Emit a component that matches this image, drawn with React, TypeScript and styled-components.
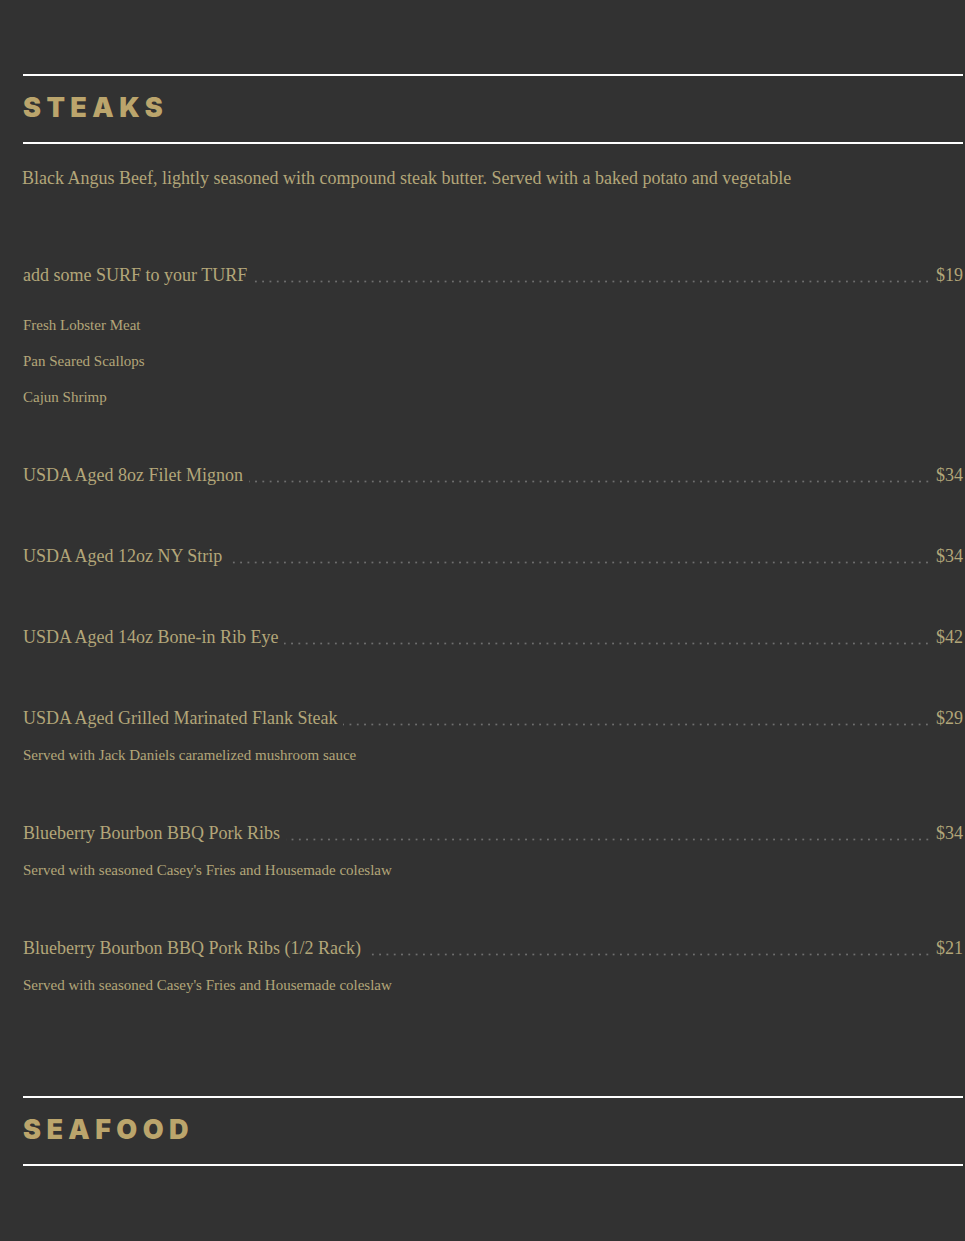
import React from 'react';
import styled, { createGlobalStyle } from 'styled-components';

const GOLD = '#b3a679';
const HEAD_GOLD = '#bba56c';

const GlobalStyle = createGlobalStyle`
  html, body {
    margin: 0;
    padding: 0;
    background: #323232;
  }
  body {
    font-family: "Liberation Serif", "Times New Roman", serif;
    color: ${GOLD};
    overflow-x: hidden;
  }
`;

const Page = styled.div`
  padding: 74px 2px 40px 23px;
`;

const Section = styled.section`
  margin-bottom: 102px;
`;

const SectionHeader = styled.div`
  border-top: 2px solid #ffffff;
  border-bottom: 2px solid #ffffff;
  height: 66px;
  display: flex;
  align-items: center;
`;

const SectionTitle = styled.h2`
  margin: 0;
  padding-bottom: 3px;
  font-family: Inter, Lato, "DejaVu Sans", sans-serif;
  font-weight: 900;
  font-size: 27px;
  letter-spacing: 5.4px;
  color: ${HEAD_GOLD};
  line-height: 1;
`;

const Description = styled.p`
  margin: 22px 0 0 -1px;
  font-size: 18px;
  line-height: 24px;
`;

const ItemList = styled.div`
  margin-top: 73px;
  display: flex;
  flex-direction: column;
  gap: 57px;
`;

const Item = styled.div`
  display: flex;
  flex-direction: column;
`;

const Row = styled.div`
  display: flex;
  align-items: stretch;
  font-size: 18px;
  line-height: 24px;
`;

const Name = styled.span`
  white-space: nowrap;
`;

const Leader = styled.span`
  flex: 1;
  margin: 0 5px 0 6px;
  background-image: radial-gradient(circle, #6f6f6f 0.9px, transparent 1.2px);
  background-size: 7.3px 3px;
  background-repeat: repeat-x;
  background-position: right 0 bottom 4px;
`;

const Price = styled.span`
  white-space: nowrap;
`;

const Note = styled.div`
  margin-top: 16px;
  font-size: 15px;
  line-height: 18px;
`;

const SubList = styled.div`
  margin-top: 29px;
  display: flex;
  flex-direction: column;
  gap: 18px;
  font-size: 15px;
  line-height: 18px;
`;

interface MenuItem {
  name: string,
  price: string,
  note?: string,
  subs?: string[],
}

const STEAKS: MenuItem[] = [
  {
    name: 'add some SURF to your TURF',
    price: '$19',
    subs: ['Fresh Lobster Meat', 'Pan Seared Scallops', 'Cajun Shrimp'],
  },
  { name: 'USDA Aged 8oz Filet Mignon', price: '$34' },
  { name: 'USDA Aged 12oz NY Strip', price: '$34' },
  { name: 'USDA Aged 14oz Bone-in Rib Eye', price: '$42' },
  {
    name: 'USDA Aged Grilled Marinated Flank Steak',
    price: '$29',
    note: 'Served with Jack Daniels caramelized mushroom sauce',
  },
  {
    name: 'Blueberry Bourbon BBQ Pork Ribs',
    price: '$34',
    note: "Served with seasoned Casey's Fries and Housemade coleslaw",
  },
  {
    name: 'Blueberry Bourbon BBQ Pork Ribs (1/2 Rack)',
    price: '$21',
    note: "Served with seasoned Casey's Fries and Housemade coleslaw",
  },
];

const SEAFOOD: MenuItem[] = [
  { name: 'Pan Seared Atlantic Salmon with Lemon Dill Butter', price: '$26' },
];

function MenuRow (props: { item: MenuItem }) :React.ReactElement {
  const { item } = props;

  return (
    <Item>
      <Row>
        <Name>{ item.name }</Name>
        <Leader />
        <Price>{ item.price }</Price>
      </Row>
      { item.note && <Note>{ item.note }</Note> }
      { item.subs && (
        <SubList>
          { item.subs.map(s => <div key={s}>{ s }</div>) }
        </SubList>
      ) }
    </Item>
  );
}

export default function App () :React.ReactElement {
  return (
    <Page>
      <GlobalStyle />
      <Section>
        <SectionHeader>
          <SectionTitle>STEAKS</SectionTitle>
        </SectionHeader>
        <Description>
          Black Angus Beef, lightly seasoned with compound steak butter. Served with a baked potato and vegetable
        </Description>
        <ItemList>
          { STEAKS.map(i => <MenuRow key={i.name} item={i} />) }
        </ItemList>
      </Section>
      <Section>
        <SectionHeader>
          <SectionTitle>SEAFOOD</SectionTitle>
        </SectionHeader>
        <ItemList>
          { SEAFOOD.map(i => <MenuRow key={i.name} item={i} />) }
        </ItemList>
      </Section>
    </Page>
  );
}
